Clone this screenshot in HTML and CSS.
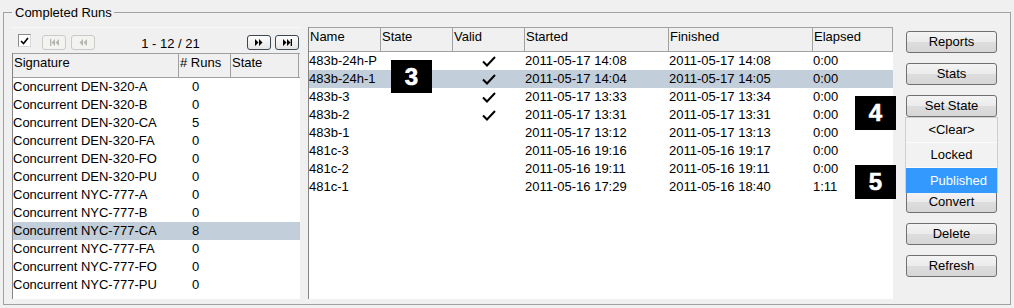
FILE: index.html
```html
<!DOCTYPE html>
<html>
<head>
<meta charset="utf-8">
<link rel="stylesheet" href="styles.css">
</head>
<body>
<div class="page">
  <fieldset class="group">
    <legend>Completed Runs</legend>
    <div class="content">
      <div class="sigpanel">
        <div class="toolbar">
          <span class="checkbox"><svg width="9" height="8" viewBox="0 0 9 8"><path d="M1 4 L3.5 6.5 L8 1" fill="none" stroke="#000" stroke-width="1.6"/></svg></span>
          <span class="nav disabled first"><svg width="9" height="7" viewBox="0 0 9 7"><path d="M0 0H1.3V7H0Z M5 0V7L1.5 3.5Z M9 0V7L5.5 3.5Z"/></svg></span>
          <span class="nav disabled"><svg width="8" height="7" viewBox="0 0 8 7"><path d="M4 0V7L0.5 3.5Z M8 0V7L4.5 3.5Z"/></svg></span>
          <span class="pager">1 - 12 / 21</span>
          <span class="nav"><svg width="8" height="7" viewBox="0 0 8 7"><path d="M0 0V7L3.5 3.5Z M4 0V7L7.5 3.5Z"/></svg></span>
          <span class="nav last"><svg width="9" height="7" viewBox="0 0 9 7"><path d="M0 0V7L3.5 3.5Z M4 0V7L7.5 3.5Z M7.7 0H9V7H7.7Z"/></svg></span>
        </div>
        <div class="sig-list">
          <div class="sig-row sig-head"><span>Signature</span><span># Runs</span><span>State</span></div>
          <div class="sig-row"><span>Concurrent DEN-320-A</span><span class="num">0</span><span></span></div>
          <div class="sig-row"><span>Concurrent DEN-320-B</span><span class="num">0</span><span></span></div>
          <div class="sig-row"><span>Concurrent DEN-320-CA</span><span class="num">5</span><span></span></div>
          <div class="sig-row"><span>Concurrent DEN-320-FA</span><span class="num">0</span><span></span></div>
          <div class="sig-row"><span>Concurrent DEN-320-FO</span><span class="num">0</span><span></span></div>
          <div class="sig-row"><span>Concurrent DEN-320-PU</span><span class="num">0</span><span></span></div>
          <div class="sig-row"><span>Concurrent NYC-777-A</span><span class="num">0</span><span></span></div>
          <div class="sig-row"><span>Concurrent NYC-777-B</span><span class="num">0</span><span></span></div>
          <div class="sig-row selected"><span>Concurrent NYC-777-CA</span><span class="num">8</span><span></span></div>
          <div class="sig-row"><span>Concurrent NYC-777-FA</span><span class="num">0</span><span></span></div>
          <div class="sig-row"><span>Concurrent NYC-777-FO</span><span class="num">0</span><span></span></div>
          <div class="sig-row"><span>Concurrent NYC-777-PU</span><span class="num">0</span><span></span></div>
        </div>
      </div>

      <div class="runs">
        <div class="run-row run-head"><span>Name</span><span>State</span><span>Valid</span><span>Started</span><span>Finished</span><span>Elapsed</span></div>
        <div class="run-row"><span>483b-24h-P</span><span></span><span class="valid"><svg width="14" height="11" viewBox="0 0 14 11"><path d="M1 5.5 L5 9.5 L13 1" fill="none" stroke="#000" stroke-width="2"/></svg></span><span>2011-05-17 14:08</span><span>2011-05-17 14:08</span><span>0:00</span></div>
        <div class="run-row selected"><span>483b-24h-1</span><span></span><span class="valid"><svg width="14" height="11" viewBox="0 0 14 11"><path d="M1 5.5 L5 9.5 L13 1" fill="none" stroke="#000" stroke-width="2"/></svg></span><span>2011-05-17 14:04</span><span>2011-05-17 14:05</span><span>0:00</span></div>
        <div class="run-row"><span>483b-3</span><span></span><span class="valid"><svg width="14" height="11" viewBox="0 0 14 11"><path d="M1 5.5 L5 9.5 L13 1" fill="none" stroke="#000" stroke-width="2"/></svg></span><span>2011-05-17 13:33</span><span>2011-05-17 13:34</span><span>0:00</span></div>
        <div class="run-row"><span>483b-2</span><span></span><span class="valid"><svg width="14" height="11" viewBox="0 0 14 11"><path d="M1 5.5 L5 9.5 L13 1" fill="none" stroke="#000" stroke-width="2"/></svg></span><span>2011-05-17 13:31</span><span>2011-05-17 13:31</span><span>0:00</span></div>
        <div class="run-row"><span>483b-1</span><span></span><span></span><span>2011-05-17 13:12</span><span>2011-05-17 13:13</span><span>0:00</span></div>
        <div class="run-row"><span>481c-3</span><span></span><span></span><span>2011-05-16 19:16</span><span>2011-05-16 19:17</span><span>0:00</span></div>
        <div class="run-row"><span>481c-2</span><span></span><span></span><span>2011-05-16 19:11</span><span>2011-05-16 19:11</span><span>0:00</span></div>
        <div class="run-row"><span>481c-1</span><span></span><span></span><span>2011-05-16 17:29</span><span>2011-05-16 18:40</span><span>1:11</span></div>
      </div>

      <div class="actions">
        <div class="btn">Reports</div>
        <div class="btn">Stats</div>
        <div class="dropdown">
          <div class="btn">Set State</div>
          <div class="menu">
            <div class="item">&lt;Clear&gt;</div>
            <div class="item">Locked</div>
            <div class="item active">Published</div>
          </div>
        </div>
        <div class="btn convert">Convert</div>
        <div class="btn">Delete</div>
        <div class="btn">Refresh</div>
      </div>
    </div>
  </fieldset>

  <div class="badge badge-3">3</div>
  <div class="badge badge-4">4</div>
  <div class="badge badge-5">5</div>
</div>
</body>
</html>
```

FILE: styles.css
```css
* { box-sizing: border-box; }
html, body { margin: 0; padding: 0; }
body {
  background: #f0f0f0;
  font-family: "Liberation Sans", Arial, sans-serif;
  font-size: 13px;
  line-height: 18px;
  color: #000;
  width: 1014px;
  height: 308px;
  overflow: hidden;
}
.page { position: relative; padding-top: 5px; }

.group {
  margin: 0 3px;
  padding: 7px 0 5px 8px;
  border: 1px solid #a0a0a0;
  height: 300px;
  min-width: 0;
}
.group legend {
  padding: 0 2px 0 3px;
  margin-left: 0;
  line-height: 15px;
}

.content { display: flex; align-items: flex-start; }

/* left signature panel */
.sigpanel {
  width: 288px;
  height: 272px;
  display: flex;
  flex-direction: column;
}
.toolbar {
  height: 26px;
  display: flex;
  align-items: flex-start;
  padding: 7px 1px 0 6px;
  border-top: 1px solid #f8f8f8;
}
.checkbox {
  width: 13px;
  height: 13px;
  background: #fff;
  border: 1px solid #8a8a8a;
  border-right-color: #d8d8d8;
  border-bottom-color: #d8d8d8;
  display: flex;
  align-items: center;
  justify-content: center;
  margin-right: 11px;
  margin-top: -1px;
}
.nav {
  width: 24px;
  height: 15px;
  border: 1px solid #3c4650;
  border-radius: 3px;
  background: linear-gradient(#fdfdfd, #e6e6e6);
  display: flex;
  align-items: center;
  justify-content: center;
  fill: #000;
}
.nav.disabled {
  border-color: #c9cbc6;
  background: #f3f3f1;
  fill: #b5b8b0;
  margin-right: 5px;
}
.nav.last { margin-left: 4px; }
.pager {
  flex: 1;
  text-align: center;
  padding-right: 6px;
}

.sig-list {
  flex: 1;
  background: #fff;
  border-left: 1px solid #848484;
}
.sig-row {
  display: grid;
  grid-template-columns: 166px 52px 68px;
  height: 18px;
  white-space: nowrap;
}
.sig-row span { overflow: hidden; }
.sig-row.selected { background: #c2ced9; }
.sig-head {
  height: 25px;
  background: #f0f0f0;
  border-top: 1px solid #a0a0a0;
  border-bottom: 1px solid #a0a0a0;
}
.sig-head span { border-right: 1px solid #a0a0a0; padding-left: 1px; }
.num { padding-left: 13px; }

/* runs table */
.runs {
  width: 585px;
  height: 272px;
  margin-left: 8px;
  background: #fff;
  border-left: 1px solid #848484;
}
.run-row {
  display: grid;
  grid-template-columns: 72px 72px 72px 144px 144px 80px;
  height: 18px;
  white-space: nowrap;
}
.run-row.selected { background: #c2ced9; }
.run-head {
  height: 25px;
  background: #f0f0f0;
  border-top: 1px solid #a0a0a0;
  border-bottom: 1px solid #a0a0a0;
}
.run-head span { border-right: 1px solid #a0a0a0; padding-left: 1px; }
.valid {
  display: flex;
  align-items: center;
  justify-content: center;
  padding-top: 1px;
}

/* action buttons */
.actions {
  width: 91px;
  margin-left: 13px;
  padding-top: 4px;
  display: flex;
  flex-direction: column;
  gap: 10px;
}
.btn {
  height: 22px;
  line-height: 20px;
  text-align: center;
  border: 1px solid #707070;
  border-radius: 3px;
  background: linear-gradient(#f4f4f4 0%, #ebebeb 50%, #dddddd 51%, #d6d6d6 100%);
}
.btn.convert { margin-top: 64px; }
.dropdown { position: relative; }
.menu {
  position: absolute;
  top: 100%;
  left: -1px;
  width: 93px;
  z-index: 2;
  background: #f2f2f2;
  border: 1px solid #cfcfcf;
  border-bottom: none;
}
.menu .item {
  height: 25px;
  line-height: 24px;
  text-align: center;
  border-bottom: 1px solid #fcfcfc;
}
.menu .item.active {
  background: #3399ff;
  color: #fff;
  border-bottom: none;
  padding-left: 14px;
  line-height: 25px;
}

/* numbered callouts */
.badge {
  position: absolute;
  width: 41px;
  height: 34px;
  background: #000;
  color: #fff;
  font-weight: bold;
  font-size: 24px;
  line-height: 34px;
  text-align: center;
  -webkit-text-stroke: 0.6px #fff;
  z-index: 3;
}
.badge-3 { left: 391px; top: 60px; height: 33px; line-height: 33px; }
.badge-4 { left: 855px; top: 96px; }
.badge-5 { left: 855px; top: 165px; }
```
